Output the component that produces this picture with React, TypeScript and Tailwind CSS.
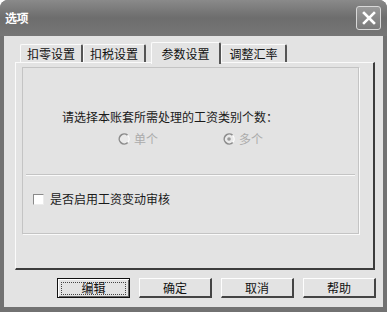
import * as React from "react";

const font = { fontFamily: '"Noto Sans CJK SC", "Noto Sans", sans-serif' };

function Tab({ label, active, w }: { label: string; active?: boolean; w: string }) {
  if (active) {
    return (
      <div
        className={`${w} h-[22px] -mb-[2px] flex items-center justify-center bg-[#e3e3e3] border-t border-l border-[#fbfbfb] border-r-2 border-r-[#555] rounded-t-[2px] relative z-10 text-[12px] text-[#111]`}
      >
        {label}
      </div>
    );
  }
  return (
    <div
      className={`${w} h-[18px] flex items-center justify-center border-t border-l border-[#fafafa] border-r-2 border-r-[#555] rounded-t-[2px] text-[12px] text-[#111]`}
    >
      {label}
    </div>
  );
}

function Radio({ checked }: { checked?: boolean }) {
  return (
    <svg width="12" height="12" viewBox="0 0 12 12">
      <circle cx="6" cy="6" r="5.5" fill="#eaeaea" />
      <path d="M9.5 2.2 A5 5 0 1 0 9.8 9.5" fill="none" stroke="#8c8c8c" strokeWidth="1.6" />
      <path d="M9.8 2.6 A5 5 0 0 1 9.8 9.4" fill="none" stroke="#fdfdfd" strokeWidth="1.2" />
      {checked && <circle cx="6" cy="6" r="1.8" fill="#9a9a9a" />}
    </svg>
  );
}

function Btn({ label, def }: { label: string; def?: boolean }) {
  return (
    <div
      className={`w-[73px] h-[20px] flex items-center justify-center bg-[#e3e3e3] text-[12px] text-[#111] ${
        def
          ? "border border-[#111] shadow-[inset_1px_1px_0_#fff,inset_-1px_-1px_0_#666]"
          : "border-t border-l border-[#fdfdfd] border-r-2 border-b-2 border-r-[#444] border-b-[#444]"
      }`}
    >
      {def ? (
        <div className="w-[65px] h-[13px] border border-dotted border-[#444] flex items-center justify-center leading-none">
          {label}
        </div>
      ) : (
        label
      )}
    </div>
  );
}

export default function App() {
  return (
    <div className="w-[387px] h-[312px] bg-white" style={font}>
      <div className="w-[387px] h-[312px] rounded-t-[8px] bg-[#727272] flex flex-col overflow-hidden">
        <div className="h-[36px] flex items-center pl-[5px] pr-[6px] bg-gradient-to-b from-[#8a8a8a] via-[#6d6d6d] to-[#767676]">
          <span className="text-white font-bold text-[12px] tracking-[-0.5px]">选项</span>
          <div className="ml-auto w-[25px] h-[24px] rounded-[3px] border border-[#d8d8d8] bg-gradient-to-b from-[#9a9a9a] to-[#7a7a7a] flex items-center justify-center">
            <svg width="14" height="14" viewBox="0 0 14 14">
              <path d="M2 2 L12 12 M12 2 L2 12" stroke="#fff" strokeWidth="2.6" strokeLinecap="square" />
            </svg>
          </div>
        </div>
        <div className="flex-1 mx-[4px] mb-[5px] bg-[#e3e3e3] flex flex-col pt-[6px] pl-[11px]">
          <div className="flex items-end h-[20px] pl-[5px]">
            <Tab label="扣零设置" w="w-[63px]" />
            <Tab label="扣税设置" w="w-[63px]" />
            <div className="w-[5px]" />
            <Tab label="参数设置" w="w-[70px]" active />
            <Tab label="调整汇率" w="w-[66px]" />
          </div>
          <div className="w-[360px] h-[208px] border-t border-l border-[#fafafa] border-r-2 border-b-2 border-r-[#3c3c3c] border-b-[#3c3c3c] pt-[4px] pl-[6px]">
            <div className="w-[337px] h-[167px] border border-[#c4c4c4] shadow-[1px_1px_0_#fafafa] flex flex-col">
              <div className="h-[106px] flex flex-col pt-[41px]">
                <div className="pl-[39px] text-[12px] text-[#1a1a1a] leading-[16px]">
                  请选择本账套所需处理的工资类别个数：
                </div>
                <div className="flex items-center mt-[7px] text-[12px] text-[#ababab] leading-[14px]">
                  <div className="flex items-center gap-[4px] ml-[95px]">
                    <Radio />
                    <span>单个</span>
                  </div>
                  <div className="flex items-center gap-[4px] ml-[65px]">
                    <Radio checked />
                    <span>多个</span>
                  </div>
                </div>
              </div>
              <div className="mx-[3px] h-[2px] border-t border-[#c4c4c4] border-b border-b-[#fafafa]" />
              <div className="flex items-center pl-[10px] mt-[14px] gap-[6px] text-[12px] text-[#1a1a1a]">
                <div className="w-[11px] h-[11px] bg-white border-t border-l border-[#8a8a8a] border-r border-b border-r-[#ececec] border-b-[#ececec]" />
                <span>是否启用工资变动审核</span>
              </div>
            </div>
          </div>
          <div className="flex gap-[9px] pl-[42px] mt-[8px]">
            <Btn label="编辑" def />
            <Btn label="确定" />
            <Btn label="取消" />
            <Btn label="帮助" />
          </div>
        </div>
      </div>
    </div>
  );
}
